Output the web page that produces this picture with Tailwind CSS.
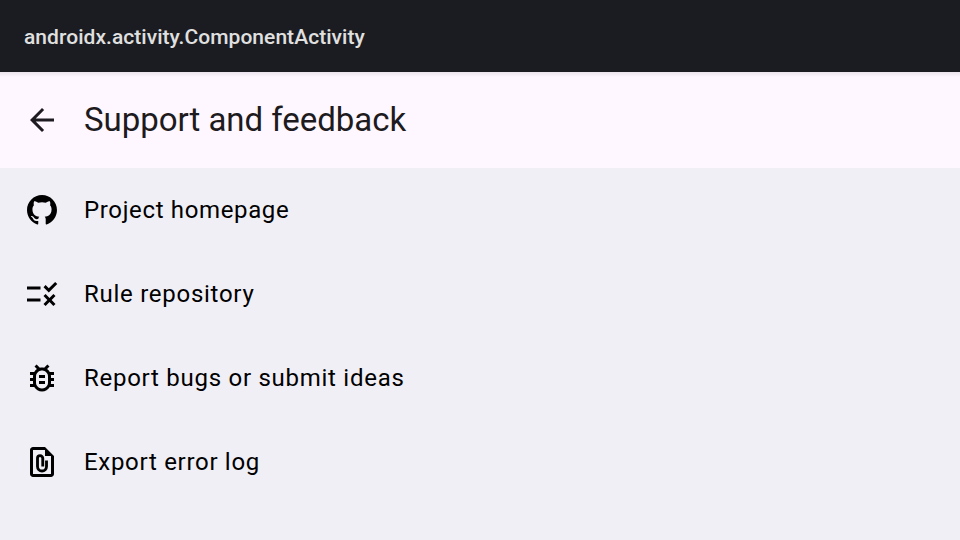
<!DOCTYPE html>
<html lang="en">
<head>
<meta charset="utf-8">
<title>Support and feedback</title>
<script src="https://cdn.jsdelivr.net/npm/@tailwindcss/browser@4"></script>
</head>
<body class="h-screen w-screen overflow-hidden bg-[#f0eff6] font-[Roboto,sans-serif] flex flex-col">
<div class="h-[72px] shrink-0 bg-[#1b1c21] px-6 flex items-center">
<div class="text-[21px] leading-6 font-medium tracking-[0.045px] text-[#e0e0e0] whitespace-nowrap pt-0.5">androidx.activity.ComponentActivity</div>
</div>
<header class="h-24 shrink-0 bg-[#fef7ff] bg-[linear-gradient(#ece4ee,#fef7ff_5px)] flex items-center gap-6 pl-6">
<svg class="size-9 text-[#1d1b20]" viewBox="0 0 24 24" fill="currentColor"><path d="M20 11H7.83l5.59-5.59L12 4l-8 8 8 8 1.41-1.41L7.83 13H20v-2z"/></svg>
<h1 class="text-[33px] leading-[42px] tracking-[-0.03px] text-[#1d1b20] whitespace-nowrap">Support and feedback</h1>
</header>
<main class="flex flex-col text-2xl leading-9 tracking-[0.7px] text-black">
<div class="h-[84px] flex items-center gap-6 pl-6">
<svg class="size-9" viewBox="0 0 24 24" fill="currentColor"><path transform="translate(2 2) scale(.2047)" d="M48.854 0C21.839 0 0 22 0 49.217c0 21.756 13.993 40.172 33.405 46.69 2.427.49 3.316-1.059 3.316-2.362 0-1.141-.08-5.052-.08-9.127-13.59 2.934-16.42-5.867-16.42-5.867-2.184-5.704-5.42-7.17-5.42-7.17-4.448-3.015.324-3.015.324-3.015 4.934.326 7.523 5.052 7.523 5.052 4.367 7.496 11.404 5.378 14.235 4.074.404-3.178 1.699-5.378 3.074-6.6-10.839-1.141-22.243-5.378-22.243-24.283 0-5.378 1.94-9.778 5.014-13.2-.485-1.222-2.184-6.275.486-13.038 0 0 4.125-1.304 13.426 5.052a46.97 46.97 0 0 1 12.214-1.63c4.125 0 8.33.571 12.213 1.63 9.302-6.356 13.427-5.052 13.427-5.052 2.67 6.763.97 11.816.485 13.038 3.155 3.422 5.015 7.822 5.015 13.2 0 18.905-11.404 23.06-22.324 24.283 1.78 1.548 3.316 4.481 3.316 9.126 0 6.6-.08 11.897-.08 13.526 0 1.304.89 2.853 3.316 2.364 19.412-6.52 33.405-24.935 33.405-46.691C97.707 22 75.788 0 48.854 0z"/></svg>
<span class="tracking-[0.65px]">Project homepage</span></div>
<div class="h-[84px] flex items-center gap-6 pl-6">
<svg class="size-9" viewBox="0 0 24 24" fill="currentColor"><path d="M16.54 11L13 7.46l1.41-1.41 2.12 2.12 4.24-4.24 1.41 1.41L16.54 11zM11 7H2v2h9V7zM21 13.41L19.59 12 17 14.59 14.41 12 13 13.41 15.59 16 13 18.59 14.41 20 17 17.41 19.59 20 21 18.59 18.41 16 21 13.41zM11 15H2v2h9v-2z"/></svg>
<span class="tracking-[0.73px]">Rule repository</span></div>
<div class="h-[84px] flex items-center gap-6 pl-6">
<svg class="size-9" viewBox="0 0 24 24" fill="currentColor"><path d="M20 8h-2.81c-.45-.78-1.07-1.45-1.82-1.96L17 4.41 15.59 3l-2.17 2.17C12.96 5.06 12.49 5 12 5s-.96.06-1.41.17L8.41 3 7 4.41l1.62 1.63C7.88 6.55 7.26 7.22 6.81 8H4v2h2.09c-.05.33-.09.66-.09 1v1H4v2h2v1c0 .34.04.67.09 1H4v2h2.81c1.04 1.79 2.97 3 5.19 3s4.15-1.21 5.19-3H20v-2h-2.09c.05-.33.09-.66.09-1v-1h2v-2h-2v-1c0-.34-.04-.67-.09-1H20V8zm-4 4v3c0 .22-.03.47-.07.7l-.1.65-.37.65c-.72 1.24-2.04 2-3.46 2s-2.74-.77-3.46-2l-.37-.64-.1-.65C8.03 15.48 8 15.23 8 15v-4c0-.23.03-.48.07-.7l.1-.65.37-.65c.3-.52.72-.97 1.21-1.31l.57-.39.74-.18c.31-.08.63-.12.94-.12.32 0 .63.04.95.12l.68.16.61.42c.5.34.91.78 1.21 1.31l.38.65.1.65c.04.22.07.47.07.69v1zM10 14h4v2h-4zM10 10h4v2h-4z"/></svg>
<span class="tracking-[0.73px]">Report bugs or submit ideas</span></div>
<div class="h-[84px] flex items-center gap-6 pl-6">
<svg class="size-9" viewBox="0 0 24 24" fill="currentColor"><path fill-rule="evenodd" d="M14 2H6c-1.1 0-2 .9-2 2v16c0 1.1.9 2 2 2h12c1.1 0 2-.9 2-2V8l-6-6zM6 4h8v4h4v12H6V4z"/><path d="M15 11v4a3 3 0 0 1-6 0V9.500a1.750 1.750 0 0 1 3.500 0V15" fill="none" stroke="currentColor" stroke-width="1.900"/></svg>
<span>Export error log</span></div>
</main>
</body>
</html>
